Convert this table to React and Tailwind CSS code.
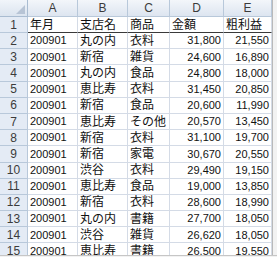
const cols = [
  { key: "A", w: "w-[50px]", num: false },
  { key: "B", w: "w-[50px]", num: false },
  { key: "C", w: "w-[42px]", num: false },
  { key: "D", w: "w-[54px]", num: true },
  { key: "E", w: "w-[48px]", num: true },
];

const rows = [
  ["年月", "支店名", "商品", "金額", "粗利益"],
  ["200901", "丸の内", "衣料", "31,800", "21,550"],
  ["200901", "新宿", "雑貨", "24,600", "16,890"],
  ["200901", "丸の内", "食品", "24,800", "18,000"],
  ["200901", "恵比寿", "衣料", "31,450", "20,850"],
  ["200901", "新宿", "食品", "20,600", "11,990"],
  ["200901", "恵比寿", "その他", "20,570", "13,450"],
  ["200901", "新宿", "衣料", "31,100", "19,700"],
  ["200901", "新宿", "家電", "30,670", "20,550"],
  ["200901", "渋谷", "衣料", "29,490", "19,150"],
  ["200901", "恵比寿", "食品", "19,000", "13,850"],
  ["200901", "新宿", "衣料", "28,600", "18,990"],
  ["200901", "丸の内", "書籍", "27,700", "18,050"],
  ["200901", "渋谷", "雑貨", "26,620", "18,050"],
  ["200901", "恵比寿", "書籍", "26,500", "19,550"],
];

const Cell = ({ col, value, first }) => {
  const isCjk = !/^[0-9,]+$/.test(value);
  return (
    <div
      className={`${col.w} shrink-0 flex items-center overflow-hidden whitespace-nowrap border-r ${
        first ? "border-b border-b-[#3a3a3a] border-r-[#d4dbe6]" : "border-b border-[#d4dbe6]"
      } ${col.num && !first ? "justify-end pr-[2px]" : "justify-start pl-[2px]"} ${
        isCjk ? "text-[12px]" : "text-[11px]"
      } text-[#111]`}
    >
      {value}
    </div>
  );
};

const App = () => {
  return (
    <div
      className="w-[277px] h-[257px] overflow-hidden flex flex-col bg-[#efefef]"
      style={{ fontFamily: '"Liberation Sans", "Noto Sans CJK JP", sans-serif' }}
    >
      <div className="flex flex-1 min-h-0">
        <div className="w-[272px] shrink-0 overflow-hidden bg-white">
          {/* column headers */}
          <div className="flex h-[17px]">
            <div className="w-[28px] shrink-0 flex items-end justify-end p-[2px] border-r border-b border-[#a9bcd1] bg-gradient-to-b from-[#f1f5fa] to-[#dbe4ef]">
              <svg width="9" height="9" viewBox="0 0 9 9">
                <polygon points="9,0 9,9 0,9" fill="#b7c4d5" />
              </svg>
            </div>
            {cols.map((c) => (
              <div
                key={c.key}
                className={`${c.w} shrink-0 flex items-center justify-center border-r border-b border-[#b8c8da] bg-gradient-to-b from-[#f3f6fa] to-[#dde5f0] text-[12px] text-[#3b3b3b]`}
              >
                {c.key}
              </div>
            ))}
          </div>

          {rows.map((r, i) => (
            <div key={i} className={`flex ${i === 0 ? "h-[16px]" : "h-[16.2px]"}`}>
              <div className="w-[28px] shrink-0 flex items-center justify-center border-r border-b border-[#b8c8da] bg-[#e4ebf5] text-[12px] text-[#3b3b3b]">
                {i + 1}
              </div>
              {cols.map((c, j) => (
                <Cell key={c.key} col={c} value={r[j]} first={i === 0} />
              ))}
            </div>
          ))}
        </div>
        <div className="flex-1 border-l border-[#b9b9b9] bg-[#f2f2f2]" />
      </div>
      <div className="h-[2px] shrink-0 border-t border-[#c6c6c6] bg-[#f2f2f2]" />
    </div>
  );
};

export default App;
